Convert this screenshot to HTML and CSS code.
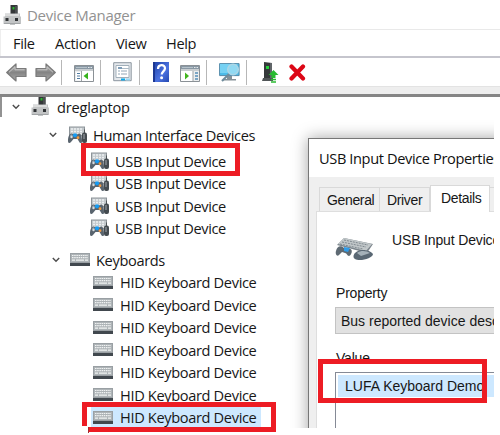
FILE: index.html
```html
<!DOCTYPE html>
<html lang="en">
<head>
<meta charset="utf-8">
<title>Device Manager</title>
<link rel="stylesheet" href="styles.css">
</head>
<body>
<svg class="defs" aria-hidden="true">
  <defs>
    <linearGradient id="metal" x1="0" y1="0" x2="0" y2="1"><stop offset="0" stop-color="#b9b9b9"/><stop offset=".5" stop-color="#858585"/><stop offset="1" stop-color="#a9a9a9"/></linearGradient>
    <linearGradient id="blue" x1="0" y1="0" x2="1" y2="1"><stop offset="0" stop-color="#1b3fa5"/><stop offset=".6" stop-color="#4c72e0"/><stop offset="1" stop-color="#2448b0"/></linearGradient>
    <symbol id="computer" viewBox="0 0 18 20">
      <path d="M7.5 0h7v9h-7z" fill="#343738"/><path d="M12 1h2.500v8h-2.500z" fill="#4b4e50"/><path d="M9.500 2h2v2.500h-2z" fill="#2bb62e"/>
      <path d="M2 8.500h15v3h1v7.500h-6v1h-5v-1h-6.500v-7.500h1.500z" fill="#c2c4c5"/><path d="M2 9h14v2h-14z" fill="#dbdcdc"/>
      <path d="M2.500 13h3v3h-3zM12 13h3v3h-3z" fill="#303335"/><path d="M1 18h16v1h-16z" fill="#a1a4a6"/>
    </symbol>
    <symbol id="hid" viewBox="0 0 20 18">
      <path d="M2 .5h16v10h-16z" fill="#8d9499"/><path d="M3 1.500h14v7h-14z" fill="#c3c9cc"/>
      <path d="M4 3h12M4 5.500h12M4 8h12" stroke="#edf0f1" stroke-width="1.300" stroke-dasharray="2 1"/>
      <path d="M1 15c0-5 1.500-7.500 4-7.500l2 1h3l2-1c2 0 3 3 3 8 0 2-2 2-3 0l-1.500-2.500h-4L4 16c-1.500 2-3 1-3-1z" fill="#59646e"/>
      <path d="M3 9l2-.7 1 2-2 1z" fill="#95a2ad"/><circle cx="8" cy="9.300" r="2.100" fill="#159bf3"/><circle cx="11" cy="11.700" r="1.400" fill="#f09b43"/><circle cx="4.500" cy="11" r="1.200" fill="#d5dce0"/>
      <path d="M17.500 7V3.500" stroke="#4f5558" fill="none"/><rect x="15" y="6.500" width="5" height="10.500" rx="2" fill="#444b50"/><path d="M17 8v5" stroke="#a1a8ad"/>
    </symbol>
    <symbol id="keyboard" viewBox="0 0 20 13">
      <path d="M0 0h20v10h-20z" fill="#9aa0a4"/><path d="M1 1h18v8h-18z" fill="#aeb4b7"/>
      <path d="M2 2.500h16M2 4.700h16" stroke="#f1f3f3" stroke-width="1.200" stroke-dasharray="1.500 .7"/><path d="M2 7.200h3M6 7.200h8M15 7.200h3" stroke="#f1f3f3" stroke-width="1.200"/>
      <path d="M0 10h20v3h-20z" fill="#41484e"/>
    </symbol>
    <symbol id="chevron" viewBox="0 0 8 6"><path d="M.8 1l3.200 3.300L7.200 1" fill="none" stroke="#4c4c4c" stroke-width="1.400"/></symbol>
    <symbol id="arrow" viewBox="0 0 21 19"><path d="M.7 9.500L10 1v4.500h10v8h-10v4.500z" fill="url(#metal)" stroke="#7b7b7b" stroke-width="1.200" stroke-linejoin="round"/><path d="M3 9.300l6-5.500v3h9.500" fill="none" stroke="#c5c5c5"/></symbol>
    <symbol id="pane" viewBox="0 0 20 17"><path d="M.5 .5h19v16h-19z" fill="#eceeef" stroke="#8b9196"/><path d="M1 1h18v3h-18z" fill="#8998a4"/><path d="M2 2.500h11" stroke="#b6c2ca"/><path d="M14 2.500h1.500M16.500 2.500h1.500" stroke="#e6ebed"/><path d="M1 5h18" stroke="#bdc2c6" stroke-width="1.500"/></symbol>
  </defs>
</svg>
<main class="screen">
  <header class="titlebar"><svg class="computer"><use href="#computer"/></svg><span>Device Manager</span></header>
  <nav class="menu"><span class="file">File</span><span class="action">Action</span><span class="view">View</span><span class="help">Help</span></nav>
  <div class="toolbar">
    <svg class="arrow"><use href="#arrow"/></svg>
    <svg class="arrow forward"><use href="#arrow"/></svg>
    <i class="sep first"></i>
    <svg class="pane" viewBox="0 0 20 17"><use href="#pane"/><path d="M2 7h5v8.500h-5z" fill="#fff"/><path d="M3 8.500h3M3 11h3M3 13.500h3" stroke="#527da2"/><path d="M7.500 6v10" stroke="#9ba1a5"/><path d="M8 6h11v10h-11z" fill="#fff"/><path d="M14 7.500v7l-4.500-3.500z" fill="#37b31c"/></svg>
    <i class="sep"></i>
    <svg class="properties" viewBox="0 0 19 20"><path d="M.7 .7h17.500v18h-17.500z" fill="#e4e8ec" stroke="#8c969f"/><path d="M3 3.500h13v12h-13z" fill="#fff" stroke="#a1afba"/><path d="M5 5h4v2h-4z" fill="#7d9cb7"/><path d="M9 6.500h7" stroke="#adbbc6"/><path d="M5 9h2M8 9h6M5 12h2M8 12h6" stroke="#92a6b6"/><path d="M8 16.500h4v2h-4z" fill="#07a8eb"/><path d="M13 16.500h4v2h-4z" fill="#9bd8f3"/></svg>
    <i class="sep"></i>
    <svg class="question" viewBox="0 0 16 20"><path d="M0 0h16v20h-16z" fill="url(#blue)"/><path d="M0 0h2v20h-2z" fill="#1c3792"/><path d="M5 7c0-5 7-5 7-.7 0 3-3.300 3.100-3.300 6.200" fill="none" stroke="#fff" stroke-width="2.200"/><circle cx="8.600" cy="15.800" r="1.500" fill="#fff"/></svg>
    <svg class="pane play" viewBox="0 0 20 17"><use href="#pane"/><path d="M1 6h12v10h-12z" fill="#fff"/><path d="M5 7.500v7l4-3.500z" fill="#43b51f"/><path d="M13 6v10" stroke="#9ba1a5"/><path d="M15 8h3M15 11h3M15 14h3" stroke="#568eb8" stroke-width="1.500"/></svg>
    <i class="sep"></i>
    <svg class="monitor" viewBox="0 0 21 20"><path d="M.6 1.600h19.500v12h-19.500z" fill="#4cbce9" stroke="#568ba9"/><path d="M1 2h18l-11 9h-7z" fill="#75d1f3"/><path d="M8 14h5v3h4v1.500H4V17h4z" fill="#859198"/><path d="M3 19l8-8" stroke="#6f8c9c" stroke-width="2.200"/><circle cx="14" cy="7.500" r="5.300" fill="#91d9f2" stroke="#acd6e6" stroke-width="1.500"/></svg>
    <i class="sep"></i>
    <svg class="update" viewBox="0 0 17 21"><path d="M2 0l8 1v16h-8z" fill="#35393b"/><path d="M10 1v16H8V1z" fill="#606568"/><path d="M4 4h3v3h-3z" fill="#25d33b"/><path d="M1 16h10v3h-11z" fill="#505557"/><path d="M11.500 8l5 5h-3v3h-4v-3h-3z" fill="#28ba31"/><path d="M9 17.500h5M9 20h5" stroke="#28ba31" stroke-width="1.400"/></svg>
    <svg class="remove" viewBox="0 0 17 17"><path d="M2.500 2.500l11.500 12M14 2.500L2.500 14.500" stroke="#dc0716" stroke-width="4.200" stroke-linecap="round"/></svg>
  </div>
  <div class="strip"></div>
  <section class="tree">
    <div class="row root"><svg class="chevron"><use href="#chevron"/></svg><svg class="computer"><use href="#computer"/></svg><span>dreglaptop</span></div>
    <div class="row group human"><svg class="chevron"><use href="#chevron"/></svg><svg class="hid"><use href="#hid"/></svg><span>Human Interface Devices</span></div>
    <div class="usb-list">
      <div class="row"><svg class="hid"><use href="#hid"/></svg><span>USB Input Device</span></div>
      <div class="row"><svg class="hid"><use href="#hid"/></svg><span>USB Input Device</span></div>
      <div class="row"><svg class="hid"><use href="#hid"/></svg><span>USB Input Device</span></div>
      <div class="row"><svg class="hid"><use href="#hid"/></svg><span>USB Input Device</span></div>
    </div>
    <div class="row group keys"><svg class="chevron"><use href="#chevron"/></svg><svg class="keyboard"><use href="#keyboard"/></svg><span>Keyboards</span></div>
    <div class="key-list">
      <div class="row"><svg class="keyboard"><use href="#keyboard"/></svg><span>HID Keyboard Device</span></div>
      <div class="row"><svg class="keyboard"><use href="#keyboard"/></svg><span>HID Keyboard Device</span></div>
      <div class="row"><svg class="keyboard"><use href="#keyboard"/></svg><span>HID Keyboard Device</span></div>
      <div class="row"><svg class="keyboard"><use href="#keyboard"/></svg><span>HID Keyboard Device</span></div>
      <div class="row"><svg class="keyboard"><use href="#keyboard"/></svg><span>HID Keyboard Device</span></div>
      <div class="row"><svg class="keyboard"><use href="#keyboard"/></svg><span>HID Keyboard Device</span></div>
      <div class="row selected"><svg class="keyboard"><use href="#keyboard"/></svg><span>HID Keyboard Device</span></div>
    </div>
  </section>
  <div class="dialog-clip">
    <section class="dialog">
      <h1><span>USB Input Device Properties</span></h1>
      <div class="tabs"><div class="tab general">General</div><div class="tab driver">Driver</div><div class="tab details">Details</div><div class="tab more"></div></div>
      <div class="page">
        <div class="device">
          <svg viewBox="0 0 39 25"><path d="M9 1l29 6-6 9L2 8z" fill="#7c858c"/><path d="M9 1l28 6-6 7L3 7z" fill="#c1c7c9"/><path d="M9 3l24 5M7 5l24 5M5 7l23 5" stroke="#808990" stroke-width="1" stroke-dasharray="2 1"/><path d="M1 14c1-5 5-6 8-3l6 1c3 0 2 6-1 7-2 0-2-3-4-3l-3-1-3 3c-2 2-4-1-3-4z" fill="#5e6a73"/><path d="M9 10l6 1-2 4-4-1z" fill="#309ce8"/><path d="M20 16c5-6 17-2 18 1 0 4-13 8-18 5-2-1-2-4 0-6z" fill="#596773"/><path d="M22 16c4-3 10-2 13 0l-9 3z" fill="#a4b0b8"/></svg>
          <span>USB Input Device</span>
        </div>
        <div class="label property">Property</div>
        <div class="combo">Bus reported device description</div>
        <div class="label value">Value</div>
        <div class="list"><div class="item">LUFA Keyboard Demo</div></div>
      </div>
    </section>
  </div>
  <div class="mark mark-usb"></div>
  <div class="mark mark-key"></div><div class="mark-side"></div><div class="mark-base"></div>
  <div class="mark mark-value"></div>
</main>
</body>
</html>
```
FILE: styles.css
```css
* { box-sizing: border-box; }
body { margin: 0; background: #fff; color: #171717; font-family: "Open Sans", "Noto Sans", sans-serif; font-size: 14.6px; }
svg { display: block; flex: none; }
.defs { position: absolute; width: 0; height: 0; }
.screen { position: relative; width: 500px; height: 435px; overflow: hidden; }
.computer { width: 18px; height: 20px; }
.titlebar { display: flex; align-items: center; height: 30px; padding-left: 3px; border-bottom: 1px solid #e9e9e9; color: #929292; }
.titlebar span { margin-left: 6px; font-size: 15px; letter-spacing: -.27px; }
.menu { display: flex; align-items: center; height: 26px; padding-left: 12px; letter-spacing: -.35px; border-left: 1px solid #eee; }
.file { width: 42px; } .action { width: 61px; } .view { width: 50px; }
.toolbar { display: flex; align-items: center; height: 30px; border-top: 2px solid #c5c5cd; padding-left: 6px; }
.arrow { width: 21px; height: 19px; }
.forward { transform: scaleX(-1); margin-left: 8px; }
.sep { width: 1px; height: 25px; background: #b7b7b7; margin: 0 12px; }
.sep.first { margin-left: 5px; }
.pane { width: 20px; height: 17px; margin-top: 3px; margin-right: -6px; }
.properties { width: 19px; height: 20px; margin-right: -5px; }
.question { width: 16px; height: 20px; margin-left: 1px; }
.pane.play { margin-left: 11px; margin-right: -6px; }
.monitor { width: 21px; height: 20px; margin-right: -6px; }
.update { width: 17px; height: 21px; margin-left: 3px; }
.remove { width: 17px; height: 17px; margin-left: 10px; }
.strip { height: 11px; background: #eee; border-top: 1px solid #e3e3e3; border-bottom: 3px solid #858585; }
.row { display: flex; align-items: center; height: 22.5px; white-space: nowrap; }
.chevron { width: 8px; height: 6px; }
.root { width: 280px; height: 20px; overflow: hidden; padding-left: 10px; border-left: 2px solid #929292; letter-spacing: -.18px; }
.root .computer { margin-left: 11px; margin-top: -2px; }
.root span { margin-left: 8px; line-height: 24px; }
.hid { width: 20px; height: 18px; }
.keyboard { width: 20px; height: 13px; }
.group { padding-left: 49px; }
.human { margin-top: 7px; letter-spacing: -.36px; }
.group .hid { margin-left: 10px; } .group span { margin-left: 6px; }
.usb-list { margin: 3px 0 0 89px; letter-spacing: -.36px; }
.usb-list span { margin-left: 6px; }
.keys { padding-left: 52px; margin-top: 9px; letter-spacing: -.35px; }
.keys .keyboard { margin-left: 10px; }
.key-list { width: 170px; margin-left: 91px; letter-spacing: -.35px; }
.key-list .row { padding-left: 2px; }
.key-list span { margin-left: 7px; }
.selected { background: #cde8ff; }
.dialog-clip { position: absolute; left: 270px; top: 110px; width: 224px; height: 318px; overflow: hidden; }
.dialog { width: 230px; height: 320px; margin: 28px 0 0 38px; border: 1px solid #777; background: #efefef; box-shadow: 0 0 15px rgba(0,0,0,.36); font-family: "Liberation Sans", sans-serif; font-size: 14px; white-space: nowrap; }
h1 { display: flex; align-items: center; height: 38px; margin: 0; padding-left: 10px; background: #fff; font: 14.6px "Open Sans", sans-serif; color: #111; }
h1 span { letter-spacing: -.38px; }
.tabs { display: flex; align-items: flex-end; height: 34px; padding-left: 10px; }
.tab { height: 24px; border: 1px solid #d9d9d9; border-bottom: 0; padding: 4px 0 0 7px; line-height: 16px; letter-spacing: -.35px; }
.general { width: 61px; } .driver { width: 50px; border-left: 0; }
.details { position: relative; width: 60px; height: 27px; background: #fff; margin-bottom: -1px; padding: 4px 0 0 10px; }
.more { width: 20px; border-left: 0; }
.page { height: 230px; margin-left: 7px; border: 1px solid #dedede; background: #fff; padding-left: 18px; }
.device { display: flex; height: 70px; padding-top: 25px; }
.device svg { width: 39px; height: 25px; }
.device span { margin-left: 18px; margin-top: -5px; line-height: 17px; letter-spacing: -.15px; }
.label { height: 18px; line-height: 18px; letter-spacing: -.2px; padding-left: 1px; }
.property { margin-top: 2px; }
.combo { height: 27px; margin-top: 5px; border: 1px solid #c3c3c3; background: #e1e1e1; padding-left: 5px; line-height: 27px; }
.value { margin-top: 15px; }
.list { height: 80px; margin-top: 5px; border: 1px solid #858a96; padding: 2px 0 0 2px; }
.item { height: 22px; line-height: 22px; background: #cde8ff; padding-left: 7px; }
.mark { position: absolute; border: 5px solid #ed1c24; }
.mark-usb { left: 81px; top: 143px; width: 159px; height: 33px; }
.mark-key { left: 82px; top: 402px; width: 194px; height: 30px; border-left: 0; border-bottom: 0; }
.mark-side { position: absolute; left: 82px; top: 402px; width: 5px; height: 24px; background: #ed1c24; }
.mark-base { position: absolute; left: 88px; top: 427px; width: 188px; height: 6px; background: linear-gradient(#ed1c24 5px, transparent 5px); border-left: 1px solid #a52c32; }
.mark-value { left: 318px; top: 359px; width: 169px; height: 44px; }
```
